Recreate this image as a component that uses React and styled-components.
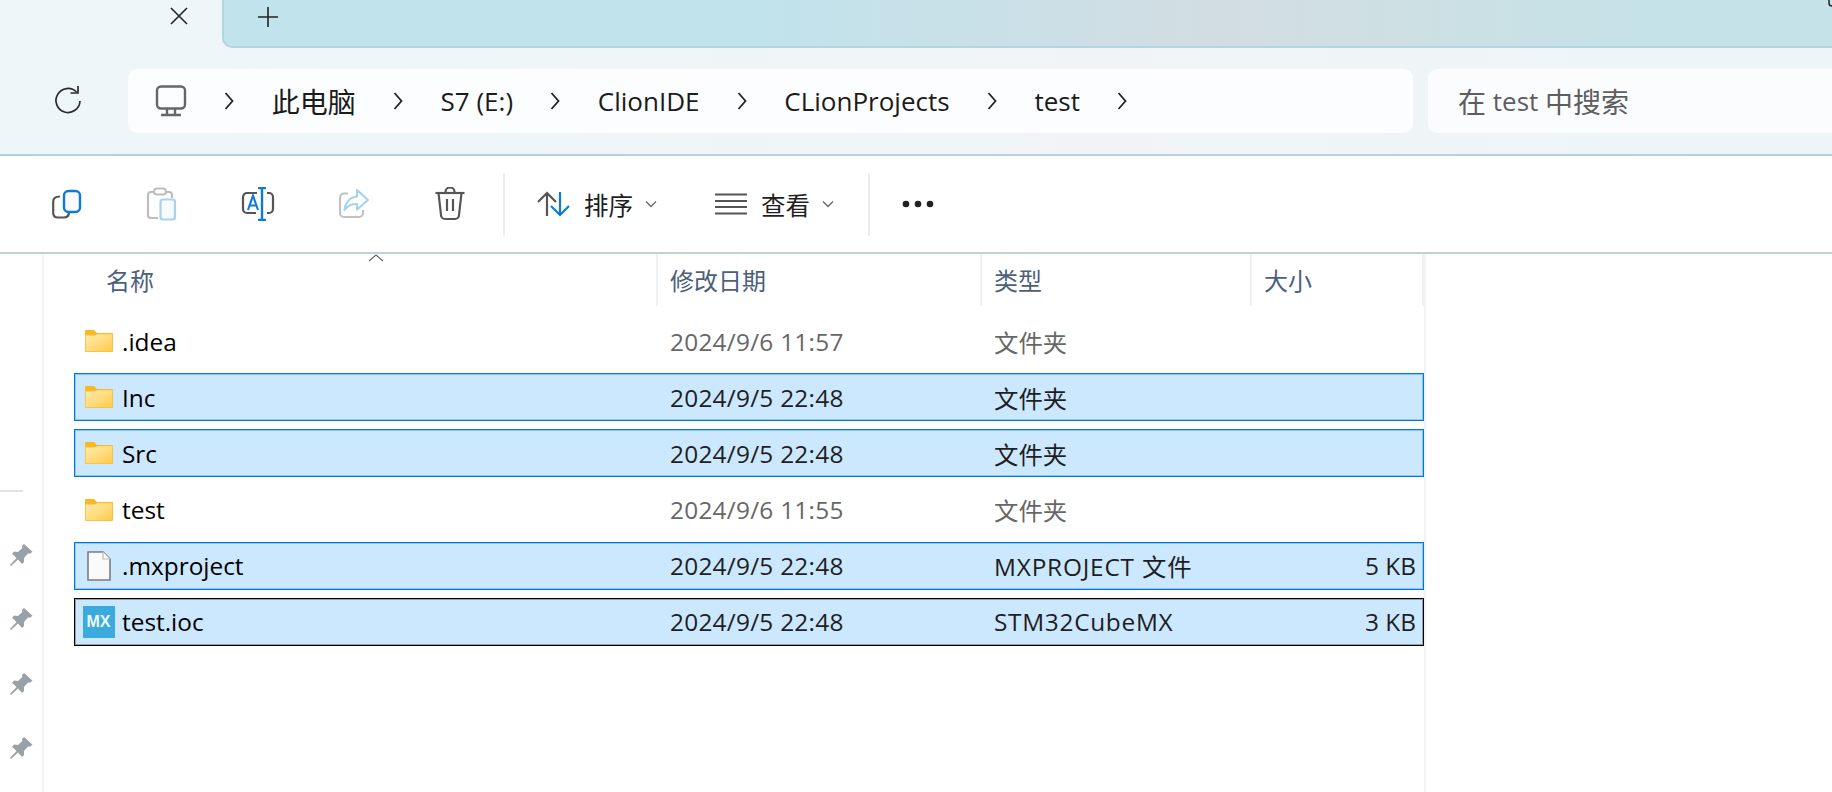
import React from 'react';
import styled, { createGlobalStyle } from 'styled-components';

const GlobalStyle = createGlobalStyle`
  html, body { margin: 0; padding: 0; background: #fff; }
  body { font-family: "Open Sans", "Noto Sans CJK SC", sans-serif; }
`;

const Window = styled.div`
  width: 1832px;
  height: 792px;
  overflow: hidden;
  display: flex;
  flex-direction: column;
  background: #fff;
`;

const TabStrip = styled.div`
  height: 48px;
  display: flex;
  background: linear-gradient(90deg, #eef6f9 0%, #eff5f7 100%);
`;

const ActiveTab = styled.div`
  width: 222px;
  display: flex;
  justify-content: flex-end;
  align-items: flex-start;
  padding: 7px 34px 0 0;
  box-sizing: border-box;
`;

const TabRest = styled.div`
  flex: 1;
  position: relative;
  display: flex;
  align-items: flex-start;
  padding: 7px 0 0 34px;
  border-left: 2px solid #b4d5de;
  border-bottom: 2px solid #b4d5de;
  border-bottom-left-radius: 10px;
  background: linear-gradient(90deg, #c1e3ec 0%, #c1e3ec 33%, #d2dde3 62%, #cfdfe3 70%, #c4e2e8 90%, #c4e2e8 100%);
`;

const CornerMark = styled.svg`
  position: absolute;
  top: 0;
  right: 0;
`;

const NavRow = styled.div`
  height: 106px;
  border-bottom: 2px solid #b5d2db;
  background: linear-gradient(90deg, #edf6f9 0%, #f0f4f6 60%, #edf5f8 100%);
  display: flex;
  align-items: center;
  padding-left: 52px;
`;

const ReloadButton = styled.div`
  width: 32px;
  height: 32px;
  margin-right: 44px;
`;

const AddressBar = styled.div`
  width: 1285px;
  height: 64px;
  border-radius: 9px;
  background: #fbfdfe;
  display: flex;
  align-items: center;
  padding-left: 27px;
  box-sizing: border-box;
  margin-right: 15px;
  color: #1b1b1b;
  font-size: 26px;
`;

const Crumb = styled.span`
  white-space: nowrap;
`;

const Wide = styled.span`
  font-family: "Noto Sans CJK SC", sans-serif;
  font-size: 28px;
`;

const CrumbChevron = styled.svg`
  margin: 0 37.4px;
  flex: none;
`;

const SearchBox = styled.div`
  flex: 1;
  height: 64px;
  border-radius: 9px 0 0 9px;
  background: #fbfcfe;
  display: flex;
  align-items: center;
  padding-left: 30px;
  color: #5e5e5e;
  font-size: 26px;
  white-space: pre;
`;

const Toolbar = styled.div`
  height: 96px;
  border-bottom: 2px solid #bcd3da;
  background: #fff;
  display: flex;
  align-items: center;
  padding-left: 18px;
`;

const IconButton = styled.div`
  width: 96px;
  height: 48px;
  display: flex;
  align-items: center;
  justify-content: center;
`;

const Divider = styled.div`
  width: 2px;
  height: 63px;
  background: #ececec;
  margin: ${({ $m }) => $m};
`;

const MenuButton = styled.div`
  display: flex;
  align-items: center;
  font-size: 24.5px;
  font-family: "Noto Sans CJK SC", sans-serif;
  color: #1f1f1f;
  width: ${({ $w }) => $w}px;
  flex: none;
  svg:first-child { margin-right: ${({ $gap }) => $gap}px; flex: none; }
  svg:last-child { margin-left: 12px; flex: none; }
`;

const Body = styled.div`
  flex: 1;
  display: flex;
  min-height: 0;
`;

const Sidebar = styled.div`
  width: 42px;
  flex: none;
  border-right: 2px solid #f3f3f3;
  display: flex;
  flex-direction: column;
  align-items: flex-start;
  padding-top: 236px;
`;

const SideRule = styled.div`
  width: 23px;
  height: 2px;
  flex: none;
  background: #e3e3e3;
  margin-bottom: 47px;
`;

const PinSlot = styled.div`
  width: 42px;
  height: 32px;
  flex: none;
  margin-bottom: 32.3px;
  display: flex;
  justify-content: center;
  align-items: center;
`;

const ListPane = styled.div`
  width: 1382px;
  flex: none;
  box-sizing: border-box;
  padding-left: 30px;
  border-right: 2px solid #f3f3f3;
  position: relative;
`;

const HeaderRow = styled.div`
  display: grid;
  grid-template-columns: 584px 324px 270px 172px;
  height: 52px;
  margin-bottom: 11px;
`;

const HeaderCell = styled.div`
  border-right: 2px solid #eef0f2;
  box-sizing: border-box;
  padding: 0 0 2px ${({ $pad }) => $pad}px;
  color: #4c607a;
  font-size: 24px;
  font-family: "Noto Sans CJK SC", sans-serif;
  display: flex;
  align-items: center;
`;

const SortCaret = styled.svg`
  position: absolute;
  left: 324px;
  top: 0;
`;

const Row = styled.div`
  display: grid;
  grid-template-columns: 582px 324px 270px 172px;
  height: 48px;
  margin-bottom: 8.2px;
  box-sizing: border-box;
  align-items: center;
  font-size: 24.4px;
  border: 1px solid ${({ $sel, $focus }) => ($focus ? '#000' : $sel ? '#0078d7' : 'transparent')};
  box-shadow: ${({ $sel, $focus }) =>
    $focus ? 'inset 0 0 0 1px rgba(0, 0, 0, 0.3)' : $sel ? 'inset 0 0 0 1px rgba(0, 120, 215, 0.3)' : 'none'};
  background: ${({ $sel }) => ($sel ? '#cce8ff' : 'transparent')};
`;

const NameCell = styled.div`
  display: flex;
  align-items: center;
  color: #000;
`;

const IconSlot = styled.div`
  width: 47px;
  flex: none;
  display: flex;
  justify-content: center;
`;

const Cell = styled.div`
  padding-left: 13px;
  letter-spacing: ${({ $track }) => $track}px;
  color: ${({ $sel }) => ($sel ? '#1e1e1e' : '#676767')};
`;

const SizeCell = styled.div`
  text-align: right;
  padding-right: 7px;
  color: #1e1e1e;
`;

const MxBadge = styled.div`
  width: 32px;
  height: 32px;
  background: #3aabdc;
  color: #eef8fc;
  font: bold 16px "Liberation Sans", sans-serif;
  display: flex;
  align-items: center;
  justify-content: center;
`;

const Chevron = () => (
  <CrumbChevron width="10" height="20" viewBox="0 0 10 20">
    <path d="M1.5 2 L8.5 10 L1.5 18" fill="none" stroke="#222" strokeWidth="1.8" />
  </CrumbChevron>
);

const SmallCaret = () => (
  <svg width="12" height="8" viewBox="0 0 12 8">
    <path d="M1 1.5 L6 6.5 L11 1.5" fill="none" stroke="#666" strokeWidth="1.3" />
  </svg>
);

const FolderIcon = () => (
  <svg width="28" height="22" viewBox="0 0 28 22">
    <path d="M1 0 H9 L12 3 H27 a1 1 0 0 1 1 1 V6 H0 V1 a1 1 0 0 1 1 -1Z" fill="#f6b825" />
    <path d="M0 4.5 H9.5 L12 3.2 H27 a1 1 0 0 1 1 1 V21 a1 1 0 0 1 -1 1 H1 a1 1 0 0 1 -1 -1Z" fill="#f6bd3a" />
    <path d="M0.8 5.4 H10 L12.2 4.2 H27.2 V20.4 a0.8 0.8 0 0 1 -0.8 0.8 H1.6 a0.8 0.8 0 0 1 -0.8 -0.8Z" fill="url(#folderFill)" />
    <defs>
      <linearGradient id="folderFill" x1="0" y1="0" x2="1" y2="1">
        <stop offset="0" stopColor="#ffebaa" />
        <stop offset="0.5" stopColor="#ffdc7e" />
        <stop offset="1" stopColor="#ffcb4a" />
      </linearGradient>
    </defs>
  </svg>
);

const FileIcon = () => (
  <svg width="24" height="30" viewBox="0 0 24 30">
    <path d="M1 1 H16 L23 8 V29 H1Z" fill="#fafafa" stroke="#7c7c7c" strokeWidth="1.6" />
    <path d="M16 1 V8 H23" fill="#fff" stroke="#b8b8b8" strokeWidth="1.2" />
  </svg>
);

const PinIcon = () => (
  <svg width="24" height="24" viewBox="0 0 24 24">
    <path d="M15 1 L23.5 8.8 L21 10.8 L19 10.4 L15 15 L15 19 L13 21 L9 16.4 L2 23 L1 22 L7.6 15 L3 10.8 L5.2 8.6 L9 9 L13.4 5 L13 3Z" fill="#97a1a8" />
  </svg>
);

const CopyIcon = () => (
  <svg width="32" height="32" viewBox="0 0 32 32" fill="none">
    <path d="M10 8.5 C6.5 8.5 3.2 10 3.2 13.5 V25 C3.2 28 5 29.5 8 29.5 H14 C17 29.5 18.5 28.5 19 25" stroke="#555" strokeWidth="2.2" />
    <rect x="14" y="3" width="16" height="21" rx="4.5" fill="#fafafa" stroke="#0f7bd3" strokeWidth="2.4" />
  </svg>
);

const PasteIcon = () => (
  <svg width="32" height="34" viewBox="0 0 32 34" fill="none">
    <path d="M8 5 H5 A3 3 0 0 0 2 8 V28 A3 3 0 0 0 5 31 H12 M20 5 H23 A3 3 0 0 1 26 8 V11" stroke="#bdbdbd" strokeWidth="2.2" />
    <rect x="8" y="1.5" width="12" height="6" rx="3" stroke="#bdbdbd" strokeWidth="2" />
    <rect x="14.5" y="12.5" width="14.5" height="20" rx="2.5" fill="#f7fbfe" stroke="#a6d1f3" strokeWidth="2.2" />
  </svg>
);

const RenameIcon = () => (
  <svg width="34" height="34" viewBox="0 0 34 34" fill="none">
    <path d="M16 6 H6 A4 4 0 0 0 2 10 V22 A4 4 0 0 0 6 26 H15 M26 6 H28 A4 4 0 0 1 32 10 V22 A4 4 0 0 1 28 26 H26" stroke="#555" strokeWidth="2.2" />
    <path d="M7 23 L12 8.5 L17 23 M8.8 18.5 H15.2" stroke="#0f7bd3" strokeWidth="2.1" />
    <path d="M17 1 H25 M21 1 V33 M17 33 H25" stroke="#0f7bd3" strokeWidth="2.4" />
  </svg>
);

const ShareIcon = () => (
  <svg width="32" height="32" viewBox="0 0 32 32" fill="none">
    <path d="M10 5.5 H6 A4 4 0 0 0 2 9.5 V25 A4 4 0 0 0 6 29 H21 A4 4 0 0 0 25 25 V22" stroke="#c2c2c2" strokeWidth="2.2" />
    <path d="M19 2 L30 12 L19 21.5 V16 C14 15.5 9.5 18 6.5 22 C7 15 12 9 19 8.5Z" fill="#fbfdff" stroke="#a6d1f3" strokeWidth="2" strokeLinejoin="round" />
  </svg>
);

const TrashIcon = () => (
  <svg width="30" height="34" viewBox="0 0 30 34" fill="none" stroke="#555" strokeWidth="2.2">
    <path d="M0.5 6 H29.5" />
    <path d="M10.5 6 V5 A4.5 4.5 0 0 1 19.5 5 V6" />
    <path d="M3.5 6 L6 28 A4 4 0 0 0 10 32 H20 A4 4 0 0 0 24 28 L26.5 6" />
    <path d="M12 12 V24 M18 12 V24" />
  </svg>
);

const SortIcon = () => (
  <svg width="33" height="26" viewBox="0 0 33 26" fill="none" strokeWidth="2.2">
    <path d="M10 25 V2 M1 11 L10 2 L19 11" stroke="#555" />
    <path d="M23 1 V24 M14 15 L23 24 L32 15" stroke="#0f7bd3" />
  </svg>
);

const ViewIcon = () => (
  <svg width="32" height="22" viewBox="0 0 32 22" fill="none" stroke="#555" strokeWidth="2">
    <path d="M0 1.5 H32 M0 8 H32 M0 14 H32 M0 20.5 H32" />
  </svg>
);

const DotsIcon = () => (
  <svg width="32" height="8" viewBox="0 0 32 8" fill="#222">
    <circle cx="4" cy="4" r="3.3" />
    <circle cx="16" cy="4" r="3.3" />
    <circle cx="28" cy="4" r="3.3" />
  </svg>
);

const files = [
  { name: '.idea', date: '2024/9/6 11:57', type: '文件夹', kind: 'folder' },
  { name: 'Inc', date: '2024/9/5 22:48', type: '文件夹', kind: 'folder', sel: true },
  { name: 'Src', date: '2024/9/5 22:48', type: '文件夹', kind: 'folder', sel: true },
  { name: 'test', date: '2024/9/6 11:55', type: '文件夹', kind: 'folder' },
  { name: '.mxproject', date: '2024/9/5 22:48', type: 'MXPROJECT 文件', track: 0.8, size: '5 KB', kind: 'file', sel: true },
  { name: 'test.ioc', date: '2024/9/5 22:48', type: 'STM32CubeMX', track: 0.7, size: '3 KB', kind: 'mx', sel: true, focus: true },
];

const crumbs = [
  <Wide key="pc">此电脑</Wide>,
  'S7 (E:)',
  'ClionIDE',
  'CLionProjects',
  'test',
];

const App = () => (
  <Window>
    <GlobalStyle />
    <TabStrip>
      <ActiveTab>
        <svg width="18" height="18" viewBox="0 0 18 18">
          <path d="M1 1 L17 17 M17 1 L1 17" stroke="#222" strokeWidth="1.6" />
        </svg>
      </ActiveTab>
      <TabRest>
        <svg width="20" height="20" viewBox="0 0 20 20">
          <path d="M10 0 V20 M0 10 H20" stroke="#222" strokeWidth="1.6" />
        </svg>
        <CornerMark width="4" height="8" viewBox="0 0 4 8">
          <path d="M1 0 V3 Q1 6 4 6" fill="none" stroke="#222" strokeWidth="1.5" />
        </CornerMark>
      </TabRest>
    </TabStrip>

    <NavRow>
      <ReloadButton>
        <svg width="32" height="32" viewBox="0 0 32 32" fill="none" stroke="#2a2a2a" strokeWidth="1.7">
          <path d="M24.5 7 A12 12 0 1 0 28 16" />
          <path d="M26 1 V8 H18.5" />
        </svg>
      </ReloadButton>
      <AddressBar>
        <svg width="32" height="32" viewBox="0 0 32 32" fill="none" stroke="#666" strokeWidth="2.4">
          <rect x="2" y="1.5" width="28" height="22" rx="4" />
          <path d="M12 24 V29 M20 24 V29 M6 30 H26" />
        </svg>
        <Chevron />
        {crumbs.map((c, i) => (
          <React.Fragment key={i}>
            <Crumb>{c}</Crumb>
            <Chevron />
          </React.Fragment>
        ))}
      </AddressBar>
      <SearchBox>
        <Wide>在</Wide> test <Wide>中搜索</Wide>
      </SearchBox>
    </NavRow>

    <Toolbar>
      <IconButton><CopyIcon /></IconButton>
      <IconButton><PasteIcon /></IconButton>
      <IconButton><RenameIcon /></IconButton>
      <IconButton><ShareIcon /></IconButton>
      <IconButton><TrashIcon /></IconButton>
      <Divider $m="0 32px 0 5px" />
      <MenuButton $w={178} $gap={14}><SortIcon />排序<SmallCaret /></MenuButton>
      <MenuButton $w={153} $gap={14}><ViewIcon />查看<SmallCaret /></MenuButton>
      <Divider $m="0 32px 0 0" />
      <DotsIcon />
    </Toolbar>

    <Body>
      <Sidebar>
        <SideRule />
        <PinSlot><PinIcon /></PinSlot>
        <PinSlot><PinIcon /></PinSlot>
        <PinSlot><PinIcon /></PinSlot>
        <PinSlot><PinIcon /></PinSlot>
      </Sidebar>
      <ListPane>
        <SortCaret width="16" height="8" viewBox="0 0 16 8">
          <path d="M1 7 L8 1 L15 7" fill="none" stroke="#666" strokeWidth="1.2" />
        </SortCaret>
        <HeaderRow>
          <HeaderCell $pad={32}>名称</HeaderCell>
          <HeaderCell $pad={12}>修改日期</HeaderCell>
          <HeaderCell $pad={12}>类型</HeaderCell>
          <HeaderCell $pad={12}>大小</HeaderCell>
        </HeaderRow>
        {files.map((f) => (
          <Row key={f.name} $sel={f.sel} $focus={f.focus}>
            <NameCell>
              <IconSlot>
                {f.kind === 'folder' && <FolderIcon />}
                {f.kind === 'file' && <FileIcon />}
                {f.kind === 'mx' && <MxBadge>MX</MxBadge>}
              </IconSlot>
              {f.name}
            </NameCell>
            <Cell $sel={f.sel} $track={0.25}>{f.date}</Cell>
            <Cell $sel={f.sel} $track={f.track || 0}>{f.type}</Cell>
            <SizeCell>{f.size}</SizeCell>
          </Row>
        ))}
      </ListPane>
    </Body>
  </Window>
);

export default App;
